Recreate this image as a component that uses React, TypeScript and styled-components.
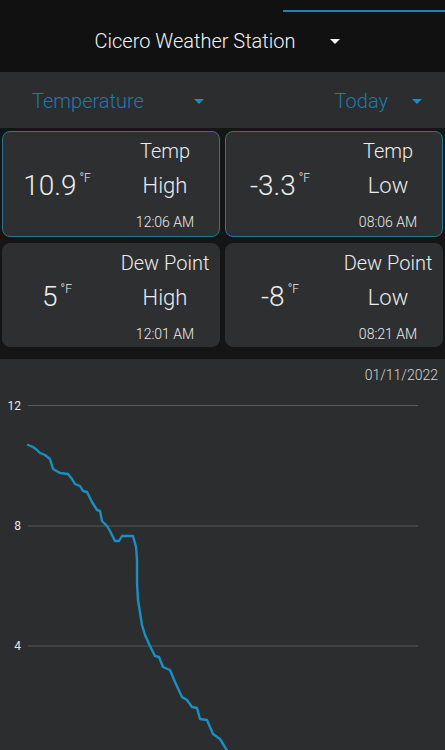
import React from "react";
import styled, { createGlobalStyle } from "styled-components";

const GlobalStyle = createGlobalStyle`
  html, body {
    margin: 0;
    padding: 0;
    background: #151515;
    font-family: Roboto, "Noto Sans", "Liberation Sans", sans-serif;
    overflow: hidden;
  }
  * { box-sizing: border-box; }
`;

const Screen = styled.div`
  width: 445px;
  height: 750px;
  overflow: hidden;
  display: flex;
  flex-direction: column;
  background: #151515;
`;

const Header = styled.header`
  height: 72px;
  flex: none;
  display: flex;
  flex-direction: column;
  background: #111111;
`;

const TabIndicator = styled.div`
  align-self: flex-end;
  width: 162px;
  height: 2px;
  margin-top: 10px;
  background: #1b84b6;
`;

const TitleRow = styled.div`
  flex: 1;
  display: flex;
  align-items: center;
  justify-content: center;
  gap: 35px;
  padding: 0 10px 2px 0;
`;

const Title = styled.span`
  font-size: 20px;
  font-weight: 300;
  color: #f4f4f4;
  line-height: 24px;
`;

const Caret = styled.span<{ $color: string }>`
  display: inline-block;
  width: 0;
  height: 0;
  border-left: 5px solid transparent;
  border-right: 5px solid transparent;
  border-top: 5px solid ${(p) => p.$color};
`;

const FilterBar = styled.div`
  height: 56px;
  flex: none;
  display: flex;
  align-items: center;
  justify-content: space-between;
  padding: 2px 23px 0 32px;
  background: #2c2d2f;
`;

const Select = styled.div<{ $gap: number }>`
  display: flex;
  align-items: center;
  gap: ${(p) => p.$gap}px;
`;

const SelectText = styled.span`
  font-size: 20px;
  font-weight: 300;
  line-height: 24px;
  color: #1f7aab;
`;

const CardGrid = styled.div`
  flex: none;
  display: grid;
  grid-template-columns: 1fr 1fr;
  grid-template-rows: 106px 104px;
  gap: 6px 5px;
  padding: 3px 2px 12px;
`;

const Card = styled.div<{ $active?: boolean }>`
  display: grid;
  grid-template-columns: 1fr 1fr;
  border-radius: 8px;
  background: #2e2f31;
  border: 1.5px solid ${(p) => (p.$active ? "#2b7594" : "#2e2f31")};
  color: #ececec;
`;

const ValueCol = styled.div`
  display: flex;
  align-items: center;
  justify-content: center;
  padding-top: 4px;
`;

const ValueGroup = styled.div`
  display: flex;
  align-items: flex-start;
`;

const Value = styled.span`
  font-size: 28px;
  font-weight: 300;
  line-height: 28px;
`;

const Unit = styled.span`
  font-size: 12px;
  font-weight: 300;
  line-height: 12px;
  margin-left: 3px;
`;

const InfoCol = styled.div`
  display: flex;
  flex-direction: column;
  align-items: center;
  padding-top: 7px;
`;

const Label = styled.span`
  font-size: 20px;
  font-weight: 300;
  line-height: 24px;
  white-space: nowrap;
`;

const Extreme = styled.span`
  font-size: 22px;
  font-weight: 300;
  line-height: 30px;
  margin-top: 8px;
`;

const Time = styled.span`
  font-size: 14px;
  font-weight: 300;
  line-height: 18px;
  margin-top: 12px;
`;

const ChartPanel = styled.section`
  flex: 1;
  display: flex;
  flex-direction: column;
  background: #2c2d2f;
`;

const DateRow = styled.div`
  display: flex;
  justify-content: flex-end;
  padding: 7px 7px 0 0;
  font-size: 14px;
  font-weight: 300;
  line-height: 18px;
  color: #d6d6d6;
`;

const ChartSvg = styled.svg`
  display: block;
  width: 445px;
  height: 420px;
  flex: none;
`;

type CardData = {
  value: string;
  label: string;
  kind: string;
  time: string;
  active?: boolean;
};

const cards: CardData[] = [
  { value: "10.9", label: "Temp", kind: "High", time: "12:06 AM", active: true },
  { value: "-3.3", label: "Temp", kind: "Low", time: "08:06 AM", active: true },
  { value: "5", label: "Dew Point", kind: "High", time: "12:01 AM" },
  { value: "-8", label: "Dew Point", kind: "Low", time: "08:21 AM" },
];

const TOP = 384;
const linePoints: [number, number][] = [
  [28, 445], [33, 447], [37, 450], [40, 453], [45, 455], [50, 459], [53, 469],
  [60, 473], [68, 474], [72, 479], [75, 484], [80, 486], [83, 491], [87, 492],
  [92, 502], [97, 510], [100, 511], [102, 521], [107, 526], [110, 531],
  [115, 541], [119, 541], [122, 536], [133, 536], [136, 547], [137, 560],
  [137, 583], [138, 600], [142, 625], [145, 635], [150, 646], [155, 656],
  [159, 657], [163, 667], [170, 670], [175, 682], [182, 697], [187, 700],
  [192, 707], [197, 708], [200, 719], [207, 720], [213, 734], [220, 739],
  [228, 752], [234, 764],
];

const grid = [
  { label: "12", y: 405.5 },
  { label: "8", y: 526 },
  { label: "4", y: 646 },
];

export default function App() {
  return (
    <>
      <GlobalStyle />
      <Screen>
        <Header>
          <TabIndicator />
          <TitleRow>
            <Title>Cicero Weather Station</Title>
            <Caret $color="#f4f4f4" />
          </TitleRow>
        </Header>
        <FilterBar>
          <Select $gap={50}>
            <SelectText>Temperature</SelectText>
            <Caret $color="#1a8cc4" />
          </Select>
          <Select $gap={24}>
            <SelectText>Today</SelectText>
            <Caret $color="#1a8cc4" />
          </Select>
        </FilterBar>
        <CardGrid>
          {cards.map((c, i) => (
            <Card key={i} $active={c.active}>
              <ValueCol>
                <ValueGroup>
                  <Value>{c.value}</Value>
                  <Unit>°F</Unit>
                </ValueGroup>
              </ValueCol>
              <InfoCol>
                <Label>{c.label}</Label>
                <Extreme>{c.kind}</Extreme>
                <Time>{c.time}</Time>
              </InfoCol>
            </Card>
          ))}
        </CardGrid>
        <ChartPanel>
          <DateRow>01/11/2022</DateRow>
          <ChartSvg viewBox={`0 ${TOP} 445 420`}>
            {grid.map((g) => (
              <g key={g.label}>
                <line x1={28} x2={418} y1={g.y} y2={g.y} stroke="#5a5b5d" strokeWidth={1} />
                <text
                  x={21}
                  y={g.y + 4}
                  textAnchor="end"
                  fontSize={12}
                  fill="#e6e6e6"
                  fontFamily="Roboto, sans-serif"
                >
                  {g.label}
                </text>
              </g>
            ))}
            <polyline
              points={linePoints.map((p) => p.join(",")).join(" ")}
              fill="none"
              stroke="#1a8fc2"
              strokeWidth={2.4}
              strokeLinejoin="round"
              strokeLinecap="round"
            />
          </ChartSvg>
        </ChartPanel>
      </Screen>
    </>
  );
}
